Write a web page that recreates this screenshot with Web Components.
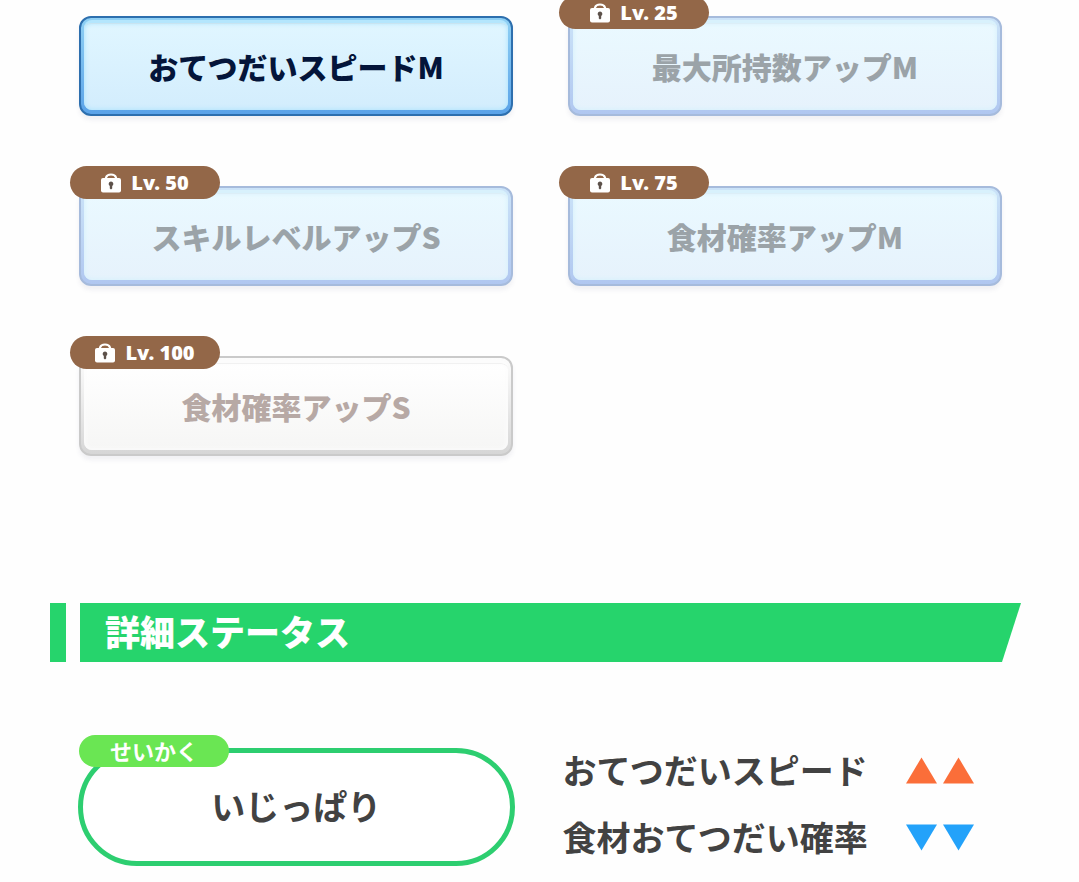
<!DOCTYPE html>
<html lang="ja">
<head>
<meta charset="utf-8">
<meta name="viewport" content="width=device-width, initial-scale=1">
<title>詳細ステータス</title>
<style>
  body {
    margin: 0;
    background: #fefefe;
    color: #424242;
    font-family: "Noto Sans CJK JP", sans-serif;
    font-weight: 900;
  }
</style>
</head>
<body>
<status-page></status-page>

<script>
class SubSkill extends HTMLElement {
  constructor() {
    super();
    this.attachShadow({ mode: "open" });
  }

  connectedCallback() {
    this.render();
  }

  render() {
    const level = this.getAttribute("level");

    this.shadowRoot.innerHTML = `
      <style>
        :host {
          display: block;
          position: relative;
          --edge: #2d6fae;
          --rim-top: #8fd0f4;
          --rim: #5ba3e8;
          --glow: #b4e6fd;
          --from: #e0f6ff;
          --to: #d3edfd;
          --line: #c9e4f1;
          --text: #04153a;
        }
        :host([level]) {
          --edge: #a6bbdc;
          --rim-top: #cbe3f8;
          --rim: #b0c7f0;
          --glow: #d8f1fc;
          --from: #eaf9ff;
          --to: #e6f2fc;
          --line: #dceef7;
          --text: #9ba3a8;
        }
        :host([tone="white"]) {
          --edge: #cacaca;
          --rim-top: #fcfcfc;
          --rim: #d6d6d6;
          --glow: #fcfcfc;
          --from: #ffffff;
          --to: #f6f6f5;
          --line: #f1f1f1;
          --text: #b7a9a5;
        }

        .card {
          display: block;
          box-sizing: border-box;
          width: 100%;
          height: 100px;
          padding: 2px 3px 4px 3px;
          border: 2px solid var(--edge);
          border-radius: 12px;
          background: linear-gradient(var(--rim-top), var(--rim));
          box-shadow: 0 4px 4px rgba(90, 90, 130, 0.08);
          color: var(--text);
          font: inherit;
          font-size: 30px;
          line-height: 44px;
        }
        .face {
          display: grid;
          place-items: center;
          box-sizing: border-box;
          height: 100%;
          padding-bottom: 2px;
          border-top: 3px solid var(--glow);
          border-radius: 8px;
          background: linear-gradient(var(--from), var(--to));
          box-shadow: inset 0 1px 0 var(--line), inset 0 0 4px 1px var(--glow);
        }

        .badge {
          position: absolute;
          top: -20px;
          left: -9px;
          display: flex;
          align-items: center;
          justify-content: center;
          gap: 10px;
          width: 150px;
          height: 33px;
          border-radius: 17px;
          background: #936748;
          color: #fff;
          font-family: "Noto Sans", "Noto Sans CJK JP", sans-serif;
          font-size: 20px;
          font-weight: 900;
          line-height: 33px;
        }
      </style>

      <button class="card" type="button" ${level ? "disabled" : ""}>
        <span class="face"><slot></slot></span>
      </button>
      ${level ? `
      <div class="badge">
        <svg width="20" height="20" viewBox="0 0 20 20" aria-hidden="true">
          <path d="M5 6 V4.500 Q6 1.500 10 1.500 Q14 1.500 15 4.500 V6" fill="none" stroke="#fff" stroke-width="2.200"/>
          <rect x="0" y="5" width="20" height="14.500" rx="2" fill="#fff"/>
          <path d="M10 8.500 a2.500 2.500 0 0 1 1.200 4.600 V15.500 L10 16.500 L8.800 15.500 V13.100 A2.500 2.500 0 0 1 10 8.500z" fill="#5d514a"/>
        </svg>
        <span>Lv. ${level}</span>
      </div>` : ""}
    `;
  }
}

class SectionTitle extends HTMLElement {
  constructor() {
    super();
    this.attachShadow({ mode: "open" });
    this.shadowRoot.innerHTML = `
      <style>
        :host {
          display: flex;
          gap: 14px;
        }
        .tab {
          width: 16px;
          background: #26d46c;
        }
        h2 {
          flex: 1;
          box-sizing: border-box;
          height: 59px;
          margin: 0;
          padding: 0 25px;
          background: #26d46c;
          clip-path: polygon(0 0, 100% 0, calc(100% - 19px) 100%, 0 100%);
          color: #fff;
          font-size: 35px;
          font-weight: 900;
          line-height: 56px;
        }
      </style>
      <div class="tab"></div>
      <h2><slot></slot></h2>
    `;
  }
}

class NatureBox extends HTMLElement {
  constructor() {
    super();
    this.attachShadow({ mode: "open" });
    this.shadowRoot.innerHTML = `
      <style>
        :host {
          display: grid;
          place-items: center;
          position: relative;
          box-sizing: border-box;
          height: 118px;
          padding-bottom: 2px;
          border: 5px solid #2dce70;
          border-radius: 59px;
          background: #fff;
          font-size: 34px;
          font-weight: 700;
          line-height: 44px;
        }
        .label {
          position: absolute;
          top: -18px;
          left: -4px;
          width: 150px;
          height: 32px;
          border-radius: 16px;
          background: #6ae653;
          color: #fff;
          font-size: 22px;
          line-height: 30px;
          text-align: center;
        }
      </style>
      <span class="label"><slot name="label"></slot></span>
      <slot></slot>
    `;
  }
}

class StatEffect extends HTMLElement {
  constructor() {
    super();
    this.attachShadow({ mode: "open" });
  }

  connectedCallback() {
    const up = this.getAttribute("dir") === "up";
    const points = up ? "0,27 16,0 32,27" : "0,0 32,0 16,27";
    const color = up ? "#fb6e39" : "#23a2fa";
    const arrow = `
      <svg width="31" height="27" viewBox="0 0 32 27" aria-hidden="true">
        <polygon points="${points}" fill="${color}"/>
      </svg>`;

    this.shadowRoot.innerHTML = `
      <style>
        :host {
          display: flex;
          align-items: center;
          gap: 38px;
          font-size: 34px;
          font-weight: 700;
          line-height: 44px;
          white-space: nowrap;
        }
        .arrows {
          display: flex;
          gap: 6px;
        }
      </style>
      <slot></slot>
      <span class="arrows">${arrow}${arrow}</span>
    `;
  }
}

class StatusPage extends HTMLElement {
  constructor() {
    super();
    this.attachShadow({ mode: "open" });
    this.shadowRoot.innerHTML = `
      <style>
        :host {
          display: block;
          padding: 16px 0;
        }
        .skills {
          display: grid;
          grid-template-columns: 1fr 1fr;
          gap: 70px 55px;
          padding: 0 77px 0 79px;
        }
        section-title {
          margin: 147px 58px 86px 50px;
        }
        .nature {
          display: grid;
          grid-template-columns: 1fr 1fr;
          gap: 48px;
          padding: 0 80px 0 78px;
        }
        .effects {
          display: grid;
          align-content: start;
          gap: 23px;
        }
      </style>

      <div class="skills">
        <sub-skill>おてつだいスピードM</sub-skill>
        <sub-skill level="25">最大所持数アップM</sub-skill>
        <sub-skill level="50">スキルレベルアップS</sub-skill>
        <sub-skill level="75">食材確率アップM</sub-skill>
        <sub-skill level="100" tone="white">食材確率アップS</sub-skill>
      </div>

      <section-title>詳細ステータス</section-title>

      <div class="nature">
        <nature-box><span slot="label">せいかく</span>いじっぱり</nature-box>
        <div class="effects">
          <stat-effect dir="up">おてつだいスピード</stat-effect>
          <stat-effect dir="down">食材おてつだい確率</stat-effect>
        </div>
      </div>
    `;
  }
}

customElements.define("sub-skill", SubSkill);
customElements.define("section-title", SectionTitle);
customElements.define("nature-box", NatureBox);
customElements.define("stat-effect", StatEffect);
customElements.define("status-page", StatusPage);
</script>
</body>
</html>
